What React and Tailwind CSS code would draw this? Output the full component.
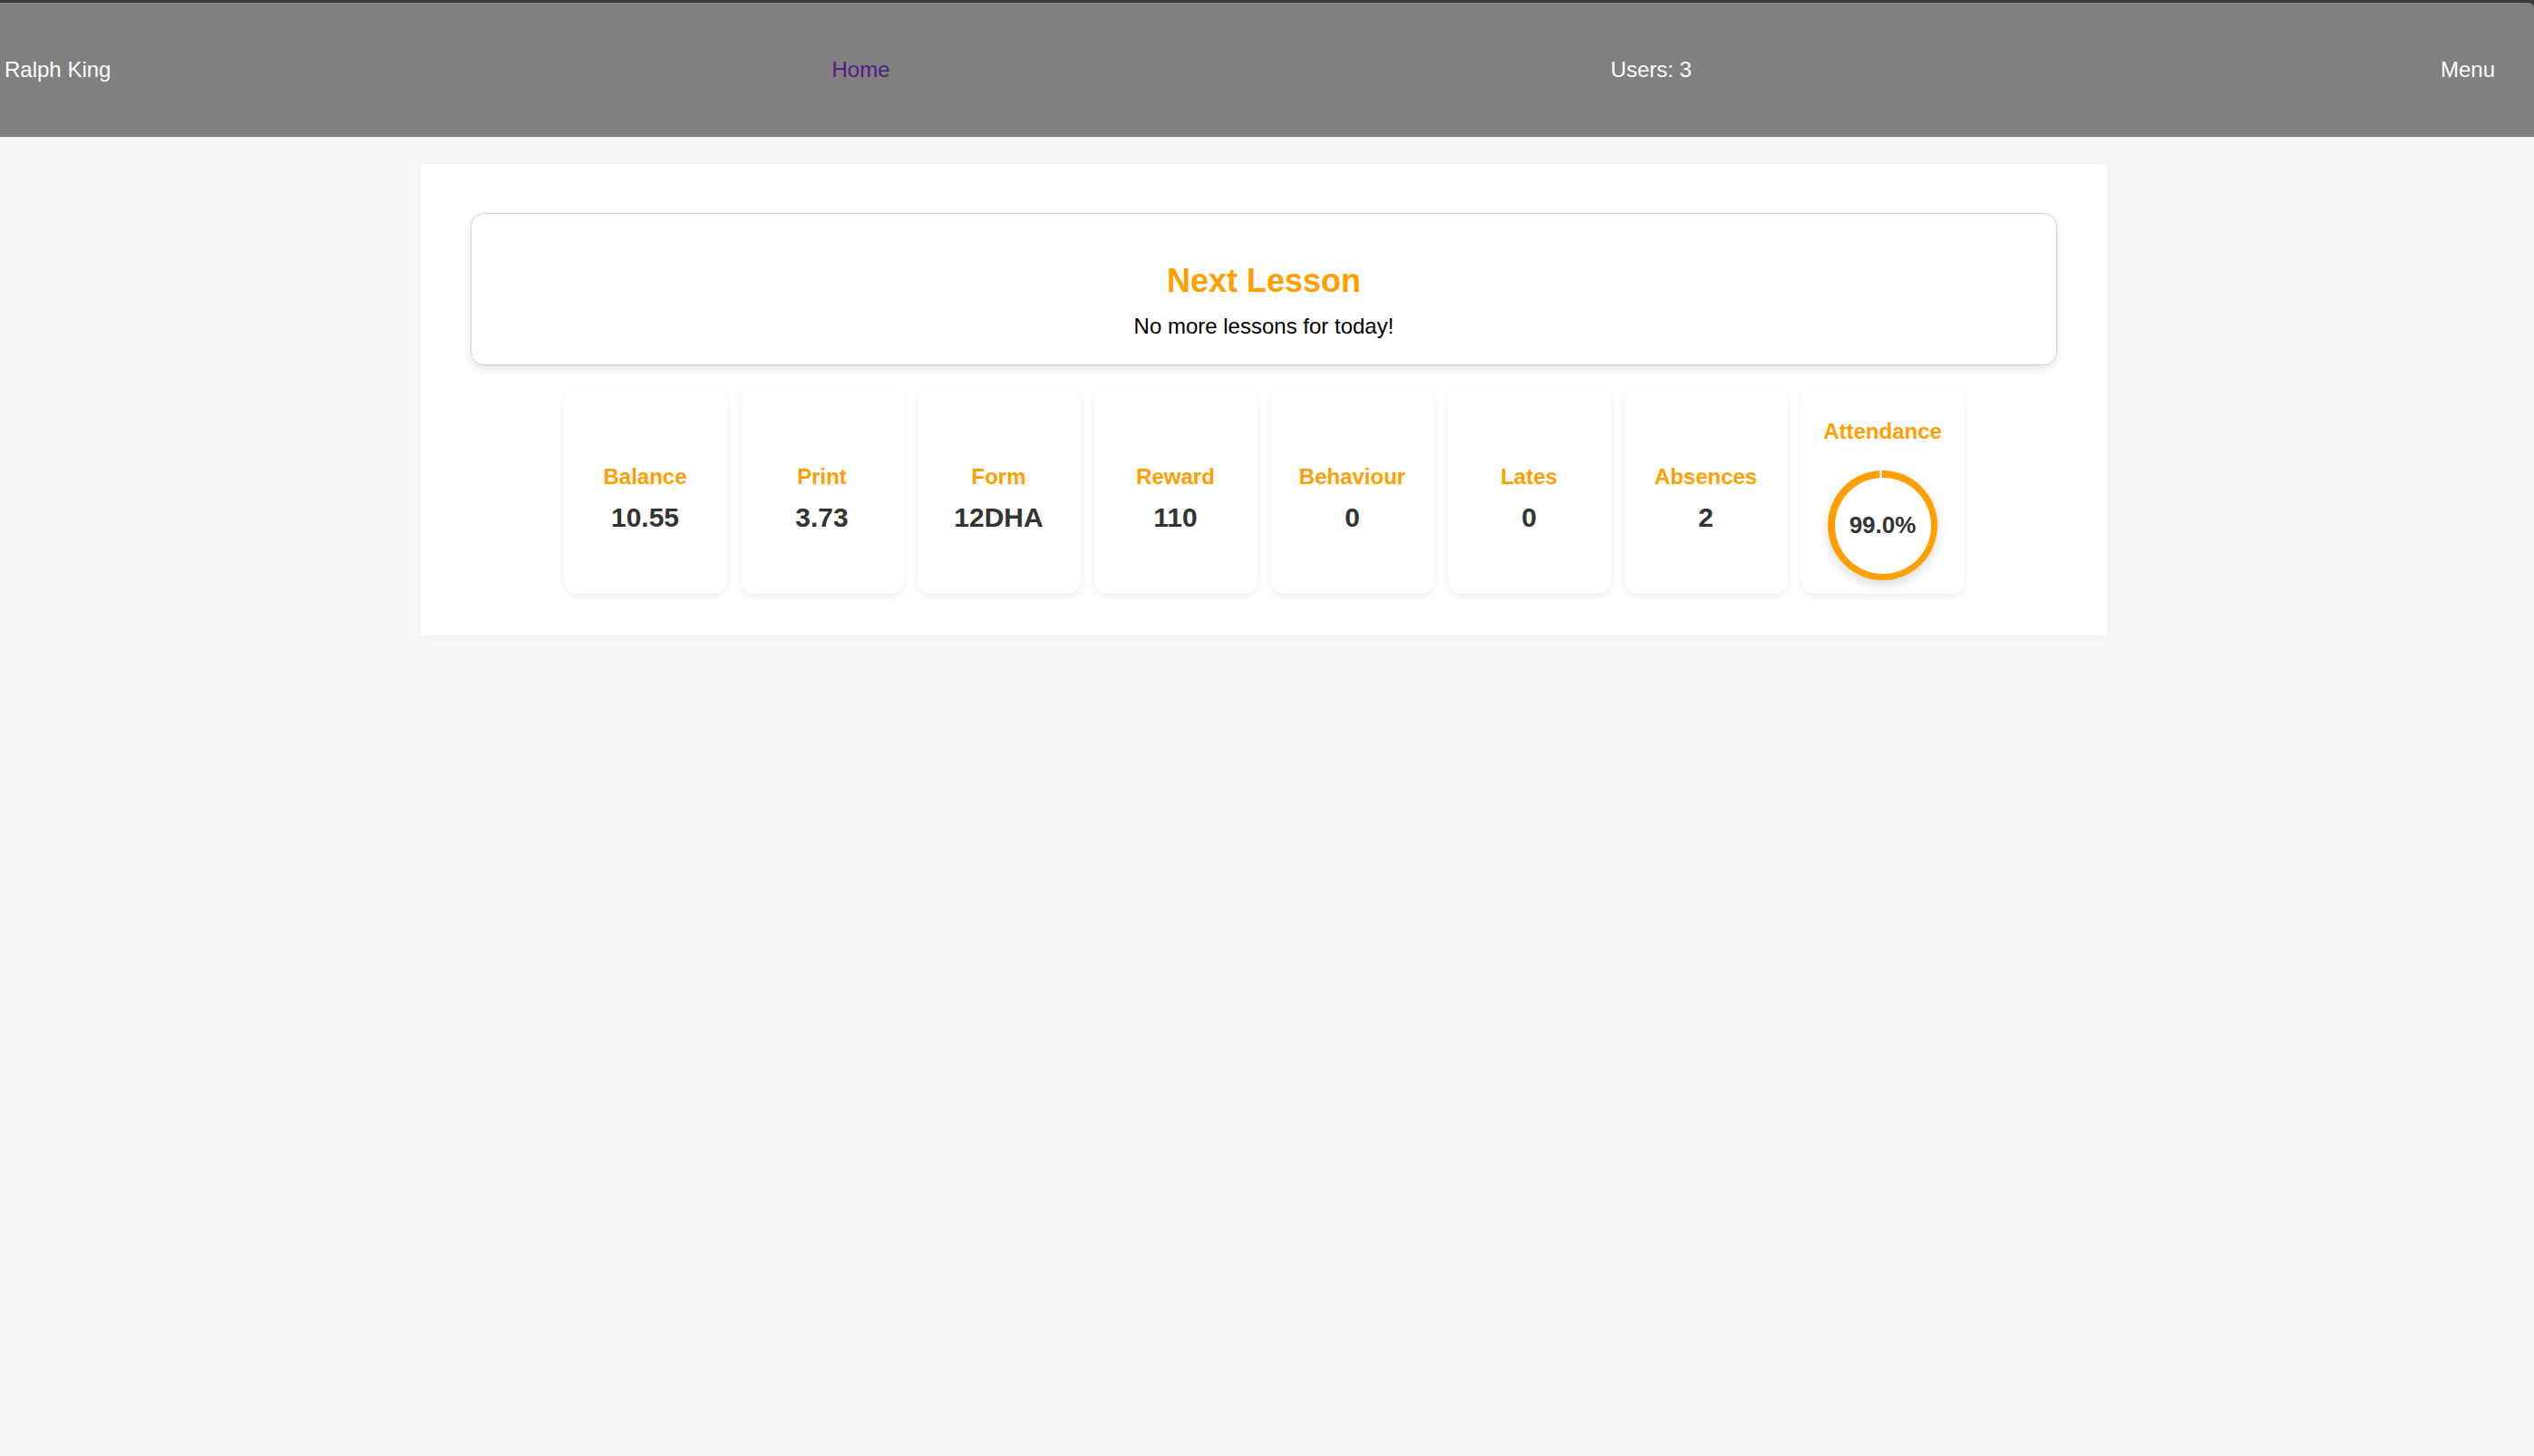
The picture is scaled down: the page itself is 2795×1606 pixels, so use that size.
import React from "react";

const stats = [
  { label: "Balance", value: "10.55" },
  { label: "Print", value: "3.73" },
  { label: "Form", value: "12DHA" },
  { label: "Reward", value: "110" },
  { label: "Behaviour", value: "0" },
  { label: "Lates", value: "0" },
  { label: "Absences", value: "2" },
];

function StatCard({ label, value }) {
  return (
    <div className="w-[180px] h-[228px] bg-white rounded-[15px] shadow-[0_3px_9px_rgba(0,0,0,0.07)] flex flex-col items-center pt-[85px]">
      <div className="text-[24px] leading-[28px] font-bold text-[#ffa000]">{label}</div>
      <div className="mt-[13px] text-[30px] leading-[35px] font-bold text-[#333333]">{value}</div>
    </div>
  );
}

function AttendanceCard({ percent }) {
  const p = percent;
  return (
    <div className="w-[180px] h-[228px] bg-white rounded-[15px] shadow-[0_3px_9px_rgba(0,0,0,0.07)] flex flex-col items-center pt-[35px]">
      <div className="text-[24px] leading-[28px] font-bold text-[#ffa000]">Attendance</div>
      <div
        className="mt-[29px] w-[121px] h-[121px] rounded-full shadow-[0_5px_12px_rgba(0,0,0,0.15)] flex items-center justify-center"
        style={{
          background: `conic-gradient(#ffa000 0% ${p}%, #e0e0e0 ${p}% 100%)`,
        }}
      >
        <div className="w-[106px] h-[106px] rounded-full bg-white flex items-center justify-center pb-[2px]">
          <span className="text-[26px] leading-[30px] font-bold text-[#333333]">{p.toFixed(1)}%</span>
        </div>
      </div>
    </div>
  );
}

export default function App() {
  return (
    <div className="min-h-screen bg-[#f8f8f8] font-['Liberation_Sans',Arial,sans-serif]">
      <div className="bg-[#3a3a3a] pt-[3px]">
        <header className="h-[148px] bg-[#808080] rounded-tr-[6px] flex items-center justify-between pl-[5px] pr-[12px] text-[24px] text-white">
          <span>Ralph King</span>
          <a className="text-[#551a8b]">Home</a>
          <span>Users: 3</span>
          <span className="px-[31px]">Menu</span>
        </header>
      </div>
      <main className="pt-[30px] flex justify-center pr-[7px]">
        <div className="w-[1860px] bg-white shadow-[0_0_10px_rgba(0,0,0,0.05)] pt-[54px] px-[55px] pb-[46px]">
          <div className="h-[168px] border-[1.5px] border-[#d0d0d0] rounded-[15px] shadow-[0_4px_10px_rgba(0,0,0,0.1)] flex flex-col items-center pt-[53px]">
            <div className="text-[36px] leading-[42px] font-bold text-[#ffa000]">Next Lesson</div>
            <div className="mt-[15px] text-[24px] leading-[28px] text-black">No more lessons for today!</div>
          </div>
          <div className="mt-[24px] flex justify-center gap-[15px]">
            {stats.map((s) => (
              <StatCard key={s.label} label={s.label} value={s.value} />
            ))}
            <AttendanceCard percent={99.0} />
          </div>
        </div>
      </main>
    </div>
  );
}
